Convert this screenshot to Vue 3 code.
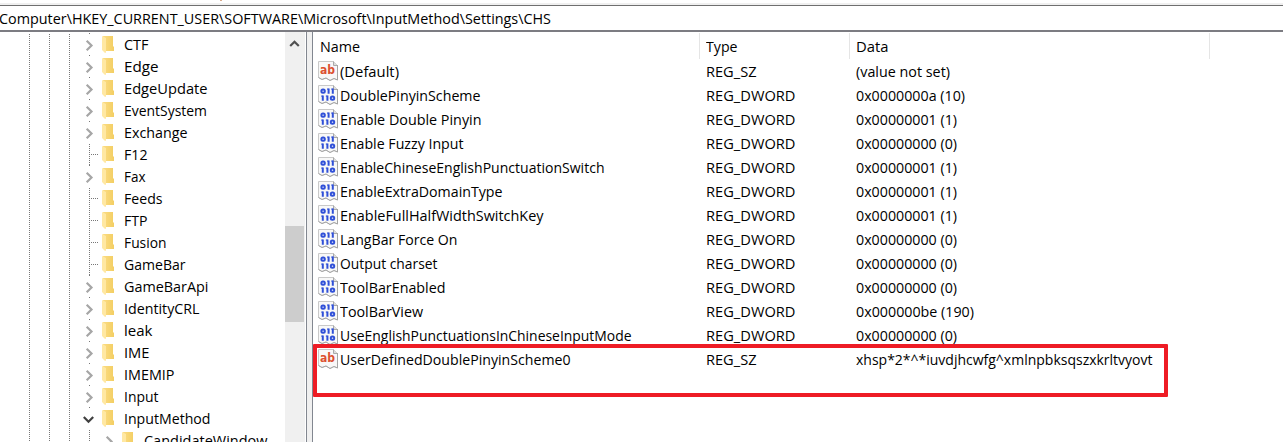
<script setup>
const tree = [
  ['CTF', 24.5, 1], ['Edge', 34.5, 1], ['EdgeUpdate', 83.5, 1], ['EventSystem', 83, 1], ['Exchange', 63.5, 1],
  ['F12', 23.5, 0], ['Fax', 21.5, 1], ['Feeds', 38.5, 0], ['FTP', 23.5, 0], ['Fusion', 42.5, 0], ['GameBar', 61.5, 0],
  ['GameBarApi', 84.5, 1], ['IdentityCRL', 75.5, 1], ['leak', 28.5, 1], ['IME', 25.5, 1], ['IMEMIP', 50.5, 1],
  ['Input', 34.5, 1], ['InputMethod', 86.5, 2],
].map(([name, width, state]) => ({ name, width, state }))

const rows = [
  ['(Default)', 59, 'REG_SZ', '(value not set)', 94],
  ['DoublePinyinScheme', 140.5, 'REG_DWORD', '0x0000000a (10)', 109],
  ['Enable Double Pinyin', 141.5, 'REG_DWORD', '0x00000001 (1)', 101],
  ['Enable Fuzzy Input', 123.5, 'REG_DWORD', '0x00000000 (0)', 101],
  ['EnableChineseEnglishPunctuationSwitch', 264.5, 'REG_DWORD', '0x00000001 (1)', 101],
  ['EnableExtraDomainType', 162.5, 'REG_DWORD', '0x00000001 (1)', 101],
  ['EnableFullHalfWidthSwitchKey', 203.5, 'REG_DWORD', '0x00000001 (1)', 101],
  ['LangBar Force On', 117.5, 'REG_DWORD', '0x00000000 (0)', 101],
  ['Output charset', 97.5, 'REG_DWORD', '0x00000000 (0)', 101],
  ['ToolBarEnabled', 105.5, 'REG_DWORD', '0x00000000 (0)', 101],
  ['ToolBarView', 83, 'REG_DWORD', '0x000000be (190)', 118],
  ['UseEnglishPunctuationsInChineseInputMode', 291.5, 'REG_DWORD', '0x00000000 (0)', 101],
  ['UserDefinedDoublePinyinScheme0', 230.5, 'REG_SZ', 'xhsp*2*^*iuvdjhcwfg^xmlnpbksqszxkrltvyovt', 296.5],
].map(([name, width, type, data, dataWidth]) => ({ name, width, type, data, dataWidth }))

const address = ['Computer', 'HKEY_CURRENT_USER', 'SOFTWARE', 'Microsoft', 'InputMethod', 'Settings', 'CHS'].join('\\')

// Condenses a label horizontally to the given width.
const vFit = {
  mounted(el, { value }) {
    el.style.transform = `scaleX(${value / el.getBoundingClientRect().width})`
  },
}
</script>

<template>
  <div class="window">
    <svg class="symbols" width="0" height="0">
      <linearGradient id="folderFace" x1="0" x2="1">
        <stop offset="0" stop-color="#fbdc83" /><stop offset="1" stop-color="#f3ce63" />
      </linearGradient>
    </svg>
    <div class="strip"><i class="tick"></i></div>
    <div class="address">
      <svg width="700" height="22"><text x="-1" y="17" textLength="552" lengthAdjust="spacingAndGlyphs">{{ address }}</text></svg>
    </div>
    <div class="panes">
      <div class="tree">
        <div v-for="item in tree" :key="item.name" class="node">
          <svg class="guides" width="102" height="22" shape-rendering="crispEdges">
            <path d="M29.5 1V22M49.5 1V22M69.5 1V22" class="dots" />
            <path v-if="item.state === 0" d="M89.5 1V22M91 11.5H98" class="dots" />
            <path v-else d="M89.5 0V1" class="dots solid" />
          </svg>
          <svg v-if="item.state" class="chevron" width="14" height="14">
            <path v-if="item.state === 1" d="M4.7 2.7L9.5 7.5L4.7 12.3" stroke="#a6a6a6" />
            <path v-else d="M1.8 5L6.5 9.7L11.2 5" stroke="#404040" />
          </svg>
          <svg class="folder" width="13" height="19">
            <path d="M1 1H11V11L12 12V16H2Z" fill="url(#folderFace)" />
            <path d="M0 1L4 3V17.5L3 18L0 15Z" fill="#ffe8a3" />
          </svg>
          <span v-fit="item.width" class="t">{{ item.name }}</span>
        </div>
        <div class="node child">
          <svg class="guides" width="102" height="22" shape-rendering="crispEdges">
            <path d="M29.5 1V22M49.5 1V22M69.5 1V22M89.5 1V22" class="dots" />
          </svg>
          <svg class="chevron" width="14" height="14"><path d="M4.7 2.7L9.5 7.5L4.7 12.3" stroke="#a6a6a6" /></svg>
          <svg class="folder" width="13" height="19">
            <path d="M1 1H11V11L12 12V16H2Z" fill="url(#folderFace)" />
            <path d="M0 1L4 3V17.5L3 18L0 15Z" fill="#ffe8a3" />
          </svg>
          <span v-fit="123.5" class="t">CandidateWindow</span>
        </div>
      </div>
      <div class="scrollbar">
        <svg width="19" height="20"><path d="M5.2 14L9.5 9.7L13.8 14" fill="none" stroke="#505050" stroke-width="2.2" /></svg>
        <div class="thumb"></div>
      </div>
      <div class="splitter"></div>
      <div class="list">
        <div class="row head">
          <div class="cell first"><span v-fit="40" class="t">Name</span></div>
          <div class="cell"><span v-fit="31.5" class="t">Type</span></div>
          <div class="cell"><span v-fit="32.5" class="t">Data</span></div>
        </div>
        <div v-for="row in rows" :key="row.name" class="row">
          <div class="cell name">
            <svg class="icon" width="20" height="20">
              <path d="M.5 .5H15.5L19.5 4.5V19L16 17.5L12 19.5L8 17L4 18.5L.5 16.5Z" fill="#f8f8f8" stroke="#c9c9c9" />
              <path d="M15.5 .5V4.5H19.5" fill="#ddd" stroke="#aaa" />
              <path d="M19.5 4V19L16 17.5L12 19.5L8 17L4 18.5L.5 16.5" fill="none" stroke="#a4a4a4" />
              <text v-if="row.type === 'REG_SZ'" x="2" y="13" class="ab" textLength="15" lengthAdjust="spacingAndGlyphs">ab</text>
              <g v-else fill="none" stroke="#3050d8" stroke-width="2">
                <rect x="3.4" y="4.6" width="3.4" height="3.2" rx="1.5" />
                <path d="M10.6 3.6V8.8M14.8 3.6V8.8M4.8 10.6V15.8M9.4 10.6V15.8" />
                <path d="M9 4.1H10.6M13.2 4.1H14.8M3.2 11.1H4.8M7.8 11.1H9.4" stroke-width="1" />
                <rect x="12.8" y="11.6" width="3.4" height="3.2" rx="1.5" />
              </g>
            </svg>
            <span v-fit="row.width" class="t">{{ row.name }}</span>
          </div>
          <div class="cell"><span v-fit="row.type === 'REG_SZ' ? 50.5 : 89.5" class="t">{{ row.type }}</span></div>
          <div class="cell"><span v-fit="row.dataWidth" class="t">{{ row.data }}</span></div>
        </div>
        <div class="highlight"></div>
      </div>
    </div>
  </div>
</template>

<style>
body { margin: 0; background: #fff; overflow: hidden; }
</style>

<style scoped>
.window { width: 1283px; height: 442px; overflow: hidden; display: flex; flex-direction: column; background: #fff; color: #000; font: 15px/22px "Open Sans", "Noto Sans", sans-serif; }
.symbols { position: absolute; }
.t { display: inline-block; white-space: pre; transform-origin: 0 50%; flex: none; }
.strip { height: 5px; flex: none; background: linear-gradient(#fff 3px, #f0f0f0 3px); }
.tick { display: block; width: 2px; height: 1px; margin-left: 220px; background: #d9a98c; }
.address { box-sizing: border-box; height: 27px; flex: none; border-top: 1px solid #6f6f6f; border-bottom: 2px solid #7c7c82; padding-top: 1px; }
.address svg { display: block; }
.panes { flex: 1; min-height: 0; display: flex; }
.tree { width: 285px; padding-top: 1px; flex: none; box-sizing: border-box; overflow: hidden; }
.node { height: 22px; display: flex; align-items: flex-start; }
.guides { flex: none; }
.dots { stroke: #777; stroke-dasharray: 1 1; fill: none; }
.solid { stroke-dasharray: none; }
.chevron { flex: none; margin: 5px 6px 0 -20px; fill: none; stroke-width: 2.2; }
.folder { flex: none; margin: 2px 9px 0 0; }
.child .chevron { margin-left: 0; }
.scrollbar { width: 19px; padding-right: 1px; flex: none; background: #f0f0f0; }
.thumb { width: 19px; height: 96px; margin-top: 169px; background: #cdcdcd; }
.splitter { width: 5px; flex: none; background: #f0f0f0; border-left: 1px solid #828790; border-right: 1px solid #828790; margin-left: 1px; }
.list { flex: 1; position: relative; }
.row { display: grid; grid-template-columns: 387px 150px 360px; height: 24px; }
.cell { padding-left: 6px; }
.head { height: 26px; padding: 1px 0; }
.head .cell { border-right: 1px solid #e5e5e5; box-sizing: border-box; padding-top: 2px; }
.head .first { padding-left: 7px; }
.name { display: flex; gap: 2px; padding-left: 5px; }
.icon { flex: none; margin-top: 1px; }
.ab { font: bold 13px "DejaVu Sans", sans-serif; fill: #dc5030; }
.highlight { position: absolute; left: 0; top: 312px; width: 855px; height: 53px; box-sizing: border-box; border: 4px solid #ee1c25; border-radius: 1px; }
</style>
